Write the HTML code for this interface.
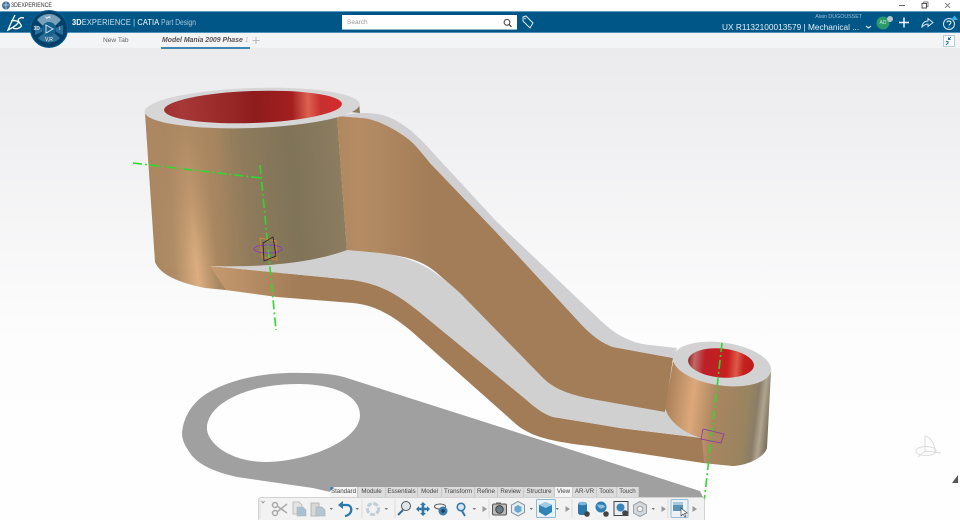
<!DOCTYPE html>
<html><head><meta charset="utf-8"><title>3DEXPERIENCE</title>
<style>
html,body{margin:0;padding:0;background:#fff}
#r{position:relative;width:960px;height:520px;overflow:hidden;font-family:"Liberation Sans",sans-serif;background:linear-gradient(180deg,#ebebed 48px,#f0f0f2 140px,#f8f8f9 260px,#fdfdfd 340px,#fefefe 520px);filter:blur(.3px)}
.a{position:absolute;white-space:nowrap}
.tab{position:absolute;top:487px;height:10px;line-height:10px;font-size:6.200px;color:#444;text-align:center;background:#dcdcdd;border-right:1px solid #c8c8c8;box-sizing:border-box}
svg{position:absolute;left:0;top:0}
</style></head><body><div id="r">
<div class="a" style="left:0;top:0;width:960px;height:11px;background:#fff"></div>
<div class="a" style="left:0;top:11px;width:960px;height:22px;background:#005686;border-top:1px solid #5f9dc0;border-bottom:1px solid #4f92b8;box-sizing:border-box"></div>
<div class="a" style="left:0;top:33px;width:960px;height:15px;background:#f3f4f6"></div>
<div class="a" style="left:161px;top:47px;width:89px;height:1.500px;background:#3f86b4"></div>

<svg width="960" height="520" viewBox="0 0 960 520">
<defs>
<linearGradient id="cyl" gradientUnits="userSpaceOnUse" x1="145" y1="200" x2="345" y2="183">
<stop offset="0" stop-color="#a8855f"/><stop offset=".12" stop-color="#b08d66"/><stop offset=".23" stop-color="#dcae80"/><stop offset=".33" stop-color="#a98760"/><stop offset=".5" stop-color="#8f7b5c"/><stop offset=".75" stop-color="#7f7358"/><stop offset="1" stop-color="#8d7d61"/>
</linearGradient>
<linearGradient id="fade" gradientUnits="userSpaceOnUse" x1="0" y1="120" x2="0" y2="265">
<stop offset="0" stop-color="#a98660" stop-opacity=".95"/><stop offset=".55" stop-color="#a98660" stop-opacity=".55"/><stop offset="1" stop-color="#a98660" stop-opacity="0"/>
</linearGradient>
<filter id="soft" x="-30%" y="-10%" width="160%" height="120%"><feGaussianBlur stdDeviation="7"/></filter>
<clipPath id="cylclip"><path d="M145,113 L155,262 C160,275 180,283 205,288 L226,290 L210,266 C265,268 315,262 347,250 L337,116 Z"/></clipPath>
<linearGradient id="band" gradientUnits="userSpaceOnUse" x1="205" y1="0" x2="300" y2="0">
<stop offset="0" stop-color="#c89c72"/><stop offset="1" stop-color="#a17c56"/>
</linearGradient>
<linearGradient id="web" gradientUnits="userSpaceOnUse" x1="337" y1="0" x2="430" y2="0">
<stop offset="0" stop-color="#b08860"/><stop offset=".25" stop-color="#b58c64"/><stop offset="1" stop-color="#a27d58"/>
</linearGradient>
<linearGradient id="scyl" gradientUnits="userSpaceOnUse" x1="665" y1="400" x2="770" y2="413">
<stop offset="0" stop-color="#a87f58"/><stop offset=".26" stop-color="#dca87a"/><stop offset=".48" stop-color="#aa8560"/><stop offset=".78" stop-color="#98845f"/><stop offset=".87" stop-color="#8a7d68"/><stop offset=".93" stop-color="#b0a590"/><stop offset="1" stop-color="#7e7260"/>
</linearGradient>
<linearGradient id="red" gradientUnits="userSpaceOnUse" x1="164" y1="0" x2="342" y2="0">
<stop offset="0" stop-color="#a12f30"/><stop offset=".1" stop-color="#a73838"/><stop offset=".3" stop-color="#9b2b2b"/><stop offset=".52" stop-color="#8f1c1c"/><stop offset=".72" stop-color="#a31f20"/><stop offset=".81" stop-color="#dd6150"/><stop offset=".88" stop-color="#c83030"/><stop offset="1" stop-color="#d62a2b"/>
</linearGradient>
<linearGradient id="sred" gradientUnits="userSpaceOnUse" x1="688" y1="0" x2="754" y2="0">
<stop offset="0" stop-color="#9a2528"/><stop offset=".1" stop-color="#c06a6a"/><stop offset=".25" stop-color="#bb1f27"/><stop offset=".6" stop-color="#c81f20"/><stop offset=".74" stop-color="#dc5a48"/><stop offset=".85" stop-color="#c42020"/><stop offset="1" stop-color="#bd1c1c"/>
</linearGradient>
</defs>

<!-- shadow -->
<path fill="#a0a0a1" fill-rule="evenodd" d="M182,433 C184,412 197,398 213,390 C240,376 275,372 303,373 C320,373 335,374 347,378 L700,491 L704,499 L360,499 L313,488 L237,477 C215,472 198,465 190,453 C185,446 182,440 182,433 Z M207,430 C209,444 230,462 267,462 C310,461 360,440 360,415 C360,396 335,384 297,384 C245,384 205,405 207,430 Z"/>

<!-- lower band -->
<path fill="url(#band)" d="M203,287 L277,297 L353,303 C372,305 388,312 410,330 L517,425 C530,435 545,441 590,446 L703,463 L733,466 L702,438 L620,428 L590,423 L553,417 C545,414 540,412 523,397 L417,310 C400,297 385,285 353,280 L210,266 Z"/>
<!-- floor -->
<path fill="#d0d0d1" d="M210,266 L353,280 C385,285 400,297 417,310 L523,397 C540,412 545,414 553,417 L590,423 L620,428 L702,438 L690,431 L665,411 L597,400 C575,396 556,391 543,378 L460,293 C437,273 420,258 380,253 L347,249 C315,262 265,268 210,266 Z"/>
<!-- web -->
<path fill="url(#web)" d="M337,116 L363,118 C375,119 392,127 407,138 C415,144 422,153 430,163 L497,233 L580,323 C592,336 602,343 613,347 L673,358 L665,412 L597,400 C575,396 556,391 543,378 L460,293 L437,273 C420,258 400,256 380,253 L347,250 Z"/>
<!-- rim -->
<path fill="#d0d0d2" d="M337,116 L358,113 C372,113 385,113 400,123 C410,129 416,135 423,142 L497,222 L597,317 C607,327 615,333 623,337 C633,342 640,344 650,345 L677,348 L673,358 L613,347 C602,343 592,336 580,323 L497,233 L430,163 C422,153 415,144 407,138 C392,127 375,119 363,118 Z"/>
<!-- back bit -->
<path fill="#8c7c5e" d="M350,112 L359,102 L360,113 Z"/>
<!-- big cylinder -->
<path fill="url(#cyl)" d="M145,113 L155,262 C160,275 180,283 205,288 L226,290 L210,266 C265,268 315,262 347,250 L337,116 Z"/>
<g clip-path="url(#cylclip)"><path fill="url(#fade)" filter="url(#soft)" d="M150,105 L215,105 L222,270 L165,270 Z"/></g>
<ellipse cx="252" cy="108" rx="107.500" ry="20" transform="rotate(-2 252 108)" fill="#d6d6d7"/>
<ellipse cx="253" cy="107" rx="89" ry="16" transform="rotate(-2 253 107)" fill="url(#red)"/>
<!-- small cylinder -->
<path fill="url(#scyl)" d="M673,362 L665,408 C669,422 685,434 702,438 L704,463 L733,466 C750,465 765,456 767,448 L771,372 Z"/>
<ellipse cx="722" cy="364" rx="49.500" ry="21.500" transform="rotate(8 722 364)" fill="#d2d2d3"/>
<ellipse cx="721" cy="363" rx="33" ry="14.500" transform="rotate(5 721 363)" fill="url(#sred)"/>

<!-- axes -->
<g stroke="#2ed92e" stroke-width="1.600" fill="none" stroke-dasharray="9 3 2 3">
<path d="M133,163 L261,178"/><path d="M260,165 L276,330"/><path d="M722,343 L702,520"/>
</g>
<!-- markers -->
<path d="M260,238 L276,241 L277,260 L262,257 Z" fill="none" stroke="#d98a2a" stroke-width=".8"/>
<ellipse cx="268" cy="249" rx="14" ry="4" fill="none" stroke="#8a36c8" stroke-width=".8"/>
<path d="M263,243 L273,237 L276,256 L264,261 Z" fill="none" stroke="#222" stroke-width=".8"/>
<path d="M703,429 L724,434 L721,443 L701,439 Z" fill="none" stroke="#8a36a8" stroke-width=".8"/>
<!-- compass -->
<g stroke="#dcdcdc" fill="none" stroke-width="1">
<ellipse cx="926" cy="451" rx="10" ry="4.500"/><path d="M925,436 L925,451 M925,451 L941,453 M925,451 L918,457"/><path d="M925,436 C932,438 935,445 935,452"/>
</g>
<path d="M952,483 L958,475 L958,483 Z" fill="#555"/>

<!-- title bar -->
<circle cx="6" cy="5.500" r="4" fill="#3b6f95"/><path d="M3,5 L9,5 M6,2 L6,9" stroke="#cfe0ec" stroke-width=".8"/>
<path d="M899,5.500 H905" stroke="#666"/><rect x="922" y="3.500" width="4.500" height="4.500" fill="none" stroke="#555"/><path d="M923.500,3 V2 H928 V6.500 H927" fill="none" stroke="#555" stroke-width=".7"/>
<path d="M945,3 L950,8 M950,3 L945,8" stroke="#666" stroke-width=".8"/>

<!-- DS logo -->
<g fill="none" stroke="#fff" stroke-width="1.300">
<path d="M15,15 L11,23 L8,30 C12,28 16,26 18,23 C19,21 15,20 11,21"/><path d="M24,18 C20,17 17,19 19,22 C21,25 23,26 19,28 C17,29 15,29 13,28"/>
</g>
<!-- compass ball -->
<circle cx="49" cy="29" r="18.500" fill="#00406b" stroke="#0a5f90" stroke-width="1"/>
<path d="M37,20 A15,15 0 0 1 61,20 L54,27 A7.500,7.500 0 0 0 44,27 Z" fill="#7aa0ba"/>
<path d="M35,25 L42,28 L42,32 L35,35 Z M63,25 L56,28 L56,32 L63,35 Z" fill="#2a6f9c"/>
<path d="M38,38 L44,33 L54,33 L60,38 C55,44 43,44 38,38 Z" fill="#326f97"/>
<circle cx="49" cy="29" r="7" fill="#14608f"/>
<path d="M46,25 L53,29 L46,33 Z" fill="none" stroke="#cfe2ee" stroke-width="1"/>
<path d="M45,17 L51,18 M46,19 L50,16" stroke="#e0e8ee" stroke-width=".8"/>

<!-- tag -->
<path d="M523,17 L526,16 L533,23 L530,28 L523,21 Z" fill="none" stroke="#dfeaf2" stroke-width="1"/><circle cx="525" cy="18.500" r=".8" fill="#dfeaf2"/>
<!-- right header -->
<path d="M866,26 L868.500,28 L871,26" fill="none" stroke="#fff" stroke-width="1"/>
<circle cx="883" cy="23" r="6.500" fill="#2a9a6a"/>
<circle cx="890" cy="19" r="3" fill="#b9c5cd"/>
<path d="M904,17.500 V27.500 M899,22.500 H909" stroke="#fff" stroke-width="1.400"/>
<path d="M922,27 C922,23 925,21 928,21 V18.500 L933,22.500 L928,26.500 V24 C926,24 924,25 922,27 Z" fill="none" stroke="#dce8f0" stroke-width="1"/>
<circle cx="949" cy="24" r="5.500" fill="none" stroke="#dce8f0" stroke-width="1"/>
<path d="M947,22.500 C947,20.500 951,20.500 951,22.500 C951,24 949,24 949,25.500 M949,27 V27.800" fill="none" stroke="#fff" stroke-width=".9"/>
<path d="M951,20 L954.500,15.500 L958,20 Z" fill="#3db2ea"/>
<!-- collapse -->
<rect x="943.500" y="35.500" width="11" height="11" fill="#fff" stroke="#9db8c8" stroke-width=".7"/>
<path d="M951,37 L948.500,39.500 M948.500,37.500 V39.500 H950.500 M946,45 L948,43 M946,41.500 H948 V43.500" stroke="#1d6c9c" fill="none" stroke-width="1"/>
<path d="M256,37 V44 M252.500,40.500 H259.500" stroke="#aaa" stroke-width=".8"/>
</svg>

<div class="a" style="left:11px;top:1.500px;font-size:6.800px;line-height:8px;color:#333;transform:scaleX(.78);transform-origin:0 0">3DEXPERIENCE</div>
<div class="a" style="left:72px;top:17px;font-size:8.700px;line-height:10px;color:#cfe0ea;letter-spacing:.15px;transform:scaleX(.855);transform-origin:0 0"><b style="color:#fff">3D</b>EXPERIENCE | <span style="color:#fff">CATIA</span> <span style="font-size:7.800px;color:#a9c6d8;letter-spacing:0">Part Design</span></div>
<div class="a" style="left:103px;top:36px;font-size:6.600px;line-height:9px;color:#666">New Tab</div>
<div class="a" style="left:162px;top:36px;font-size:6.900px;line-height:9px;color:#555;font-weight:bold;font-style:italic">Model Mania 2009 Phase <span style="color:#bbb;font-weight:normal">1</span></div>
<div class="a" style="left:342px;top:15px;width:175px;height:15px;background:#fff;border-bottom:1px solid #8db8d0;box-sizing:border-box;font-size:6.500px;line-height:15px;color:#999;text-indent:5px">Search</div>
<div class="a" style="left:780px;top:14px;width:82px;text-align:right;font-size:5.300px;line-height:7px;color:#9fc0d4">Alain DUGOUSSET</div>
<div class="a" style="left:722px;top:22px;font-size:8.300px;line-height:10px;color:#e4eef4;letter-spacing:0">UX R1132100013579 | Mechanical ...</div>
<div class="a" style="left:877px;top:20px;width:12px;text-align:center;font-size:5px;line-height:6px;color:#d0ebdc">AD</div>
<div class="a" style="left:33.500px;top:26px;font-size:5px;line-height:6px;color:#e0e8ee;font-weight:bold">3D</div>
<div class="a" style="left:59px;top:26px;font-size:5px;line-height:6px;color:#e0e8ee">i</div>
<div class="a" style="left:43px;top:37px;width:12px;text-align:center;font-size:5px;line-height:6px;color:#fff">V,R</div>

<!-- toolbar -->
<div class="a" style="left:258px;top:497px;width:447px;height:23px;background:#f2f2f3;border:1px solid #d2d2d2;border-bottom:0;border-radius:3px 3px 0 0;box-sizing:border-box"></div>
<div class="tab" style="left:330px;width:28px;background:#f4f4f5">Standard</div>
<div class="tab" style="left:358px;width:28px">Module</div>
<div class="tab" style="left:386px;width:32px">Essentials</div>
<div class="tab" style="left:418px;width:24px">Model</div>
<div class="tab" style="left:442px;width:33px">Transform</div>
<div class="tab" style="left:475px;width:23px">Refine</div>
<div class="tab" style="left:498px;width:26px">Review</div>
<div class="tab" style="left:524px;width:31px">Structure</div>
<div class="tab" style="left:555px;width:18px;background:#f4f4f5">View</div>
<div class="tab" style="left:573px;width:24px">AR-VR</div>
<div class="tab" style="left:597px;width:20px">Tools</div>
<div class="tab" style="left:617px;width:22px">Touch</div>

<svg width="960" height="520" viewBox="0 0 960 520">
<!-- search glass -->
<circle cx="507" cy="22.300" r="2.900" fill="none" stroke="#444" stroke-width="1"/><path d="M509,24.500 L511.500,26.800" stroke="#444" stroke-width="1.300"/>
<path d="M330,491 L330,487 L334,487 Z" fill="#3d86b8"/>
<path d="M261.500,501 L263,503 L264.500,501" fill="none" stroke="#888" stroke-width=".8"/>
<path d="M260,498 V519" stroke="#e0e0e0"/>
<!-- scissors -->
<g fill="none" stroke="#a9a9a9" stroke-width="1.500"><circle cx="275" cy="513" r="2.500"/><circle cx="275" cy="505" r="2.500"/><path d="M277,506 L287,513 M277,512 L287,504"/></g>
<!-- copy paste -->
<path d="M293,502 H299 L302,505 V514 H293 Z" fill="#e4e4e4" stroke="#b4b4b4" stroke-width=".8"/><path d="M297,507 H303 L306,510 V516 H297 Z" fill="#a8c0d0" stroke="#b4b4b4" stroke-width=".6"/>
<path d="M311,503 H319 V516 H311 Z" fill="#d8d8d8" stroke="#aaa" stroke-width=".8"/><path d="M316,507 H322 L325,510 V516 H316 Z" fill="#b4c6d2" stroke="#aaa" stroke-width=".6"/>
<path d="M329.500,508 L333,508 L331.300,510 Z M355.500,508 L359,508 L357.300,510 Z M384.500,508 L388,508 L386.300,510 Z M472.500,508 L476,508 L474.300,510 Z M529.500,508 L533,508 L531.300,510 Z M555.500,508 L559,508 L557.300,510 Z M651.500,508 L655,508 L653.300,510 Z" fill="#777"/>
<!-- undo -->
<path d="M341,505 H347 C353,505 353,515 345,516" fill="none" stroke="#2c79ad" stroke-width="2.300"/><path d="M338,505 L343,501 L343,509 Z" fill="#2c79ad"/>
<path d="M362,499 V518 M395,499 V518 M489,499 V518 M572,499 V518 M668,499 V518" stroke="#dcdcdc"/>
<!-- grey circle -->
<circle cx="373" cy="509" r="5.500" fill="none" stroke="#c2cdd4" stroke-width="3" stroke-dasharray="5 1.500"/>
<!-- loupe -->
<circle cx="406" cy="506" r="4.500" fill="#dde6ec" stroke="#555" stroke-width="1"/><path d="M403,510 L398,515" stroke="#2f6d96" stroke-width="2"/>
<!-- pan -->
<path d="M423,502 L426,505 L424.300,505 L424.300,507.700 L427,507.700 L427,506 L430,509 L427,512 L427,510.300 L424.300,510.300 L424.300,513 L426,513 L423,516 L420,513 L421.700,513 L421.700,510.300 L419,510.300 L419,512 L416,509 L419,506 L419,507.700 L421.700,507.700 L421.700,505 L420,505 Z" fill="#2f77a8"/>
<!-- rotate -->
<ellipse cx="440" cy="506.500" rx="5.500" ry="2.500" fill="none" stroke="#555"/><circle cx="443" cy="511" r="4.500" fill="#3a7ea8"/><circle cx="443" cy="511" r="1.800" fill="#173f5c"/>
<!-- Q zoom -->
<circle cx="461" cy="507" r="3.800" fill="#d6e6f0" stroke="#2f77a8" stroke-width="1.500"/><path d="M462,511 L465,516" stroke="#2f77a8" stroke-width="2"/>
<path d="M482.500,506 L482.500,512 L487,509 Z M565.500,506 L565.500,512 L570,509 Z M661.500,506 L661.500,512 L666,509 Z M692.500,506 L692.500,512 L697,509 Z" fill="#999"/>
<!-- camera -->
<rect x="492.500" y="504" width="14" height="11" rx="1.500" fill="#bbb" stroke="#555"/><circle cx="499.500" cy="509.500" r="3.800" fill="#6a7a84" stroke="#333" stroke-width=".8"/><rect x="496" y="502.500" width="5" height="2" fill="#666"/>
<!-- wire cube -->
<path d="M518,501.500 L524.500,505 V512.500 L518,516 L511.500,512.500 V505 Z" fill="#e6ecef" stroke="#8a979f"/><path d="M518,505 L521.500,507 V511 L518,513 L514.500,511 V507 Z" fill="#68a8cc"/>
<!-- selected cube -->
<rect x="536.500" y="499.500" width="19" height="18" rx="1" fill="#e8f2f8" stroke="#8fb8d2"/>
<path d="M545.500,502 L552,505 V512 L545.500,516 L539,512 V505 Z" fill="#2f83b6"/><path d="M539,505 L545.500,508 L552,505 L545.500,502 Z" fill="#9fcbe4"/>
<!-- db -->
<rect x="578" y="502" width="9" height="13" rx="2.500" fill="#2b78ab"/><ellipse cx="582.500" cy="503.500" rx="4.500" ry="1.800" fill="#7fb6d8"/><circle cx="587" cy="514" r="2.800" fill="#444"/>
<!-- globe -->
<circle cx="601" cy="507" r="5.500" fill="#2f7fb3"/><path d="M597,504 C600,506 604,503 605,507 C602,509 599,510 597,504Z" fill="#8cc0de"/><circle cx="606" cy="514" r="2.800" fill="#444"/>
<!-- square -->
<rect x="614" y="501.500" width="14" height="14" fill="#e8eef2" stroke="#444"/><circle cx="620.500" cy="507.500" r="4" fill="#3a86b8"/><circle cx="625" cy="513" r="2.800" fill="#444"/>
<!-- hex -->
<path d="M640,501.500 L646.500,505 V513 L640,516.500 L633.500,513 V505 Z" fill="#d4d8db" stroke="#9aa2a8"/><circle cx="640" cy="509" r="2.800" fill="#f2f2f3" stroke="#9aa2a8"/>
<!-- last -->
<rect x="671" y="499.500" width="17" height="18" rx="1" fill="#eaf2f7" stroke="#9cbdd3"/>
<path d="M673,502 H683 V511 H673 Z" fill="#5b93b6"/><path d="M673,502 H683 V505 H673 Z" fill="#a8c8dc"/><path d="M681,508 L681,516 L683,514 L685,517 L686,516 L684.500,513.500 L687,513 Z" fill="#fff" stroke="#333" stroke-width=".6"/>
</svg>
</div></body></html>
